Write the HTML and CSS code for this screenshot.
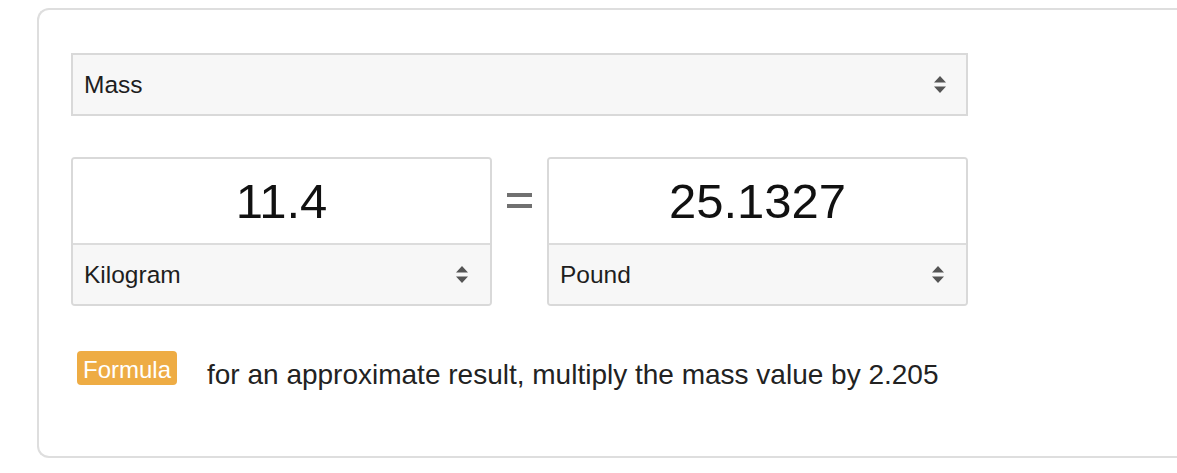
FILE: index.html
```html
<!DOCTYPE html>
<html>
<head>
<meta charset="utf-8">
<link rel="stylesheet" href="styles.css">
</head>
<body>
<div class="card">
  <div class="select select-type">
    <span>Mass</span>
    <svg class="arrows" width="12" height="17" viewBox="0 0 12 17"><path d="M6 0 L12 6.5 L0 6.5 Z M0 10.5 L12 10.5 L6 17 Z" fill="#555"/></svg>
  </div>
  <div class="converter">
    <div class="unit-box">
      <div class="value">11.4</div>
      <div class="select unit-select">
        <span>Kilogram</span>
        <svg class="arrows" width="12" height="17" viewBox="0 0 12 17"><path d="M6 0 L12 6.5 L0 6.5 Z M0 10.5 L12 10.5 L6 17 Z" fill="#555"/></svg>
      </div>
    </div>
    <div class="equals"><span class="bar"></span><span class="bar"></span></div>
    <div class="unit-box">
      <div class="value">25.1327</div>
      <div class="select unit-select">
        <span>Pound</span>
        <svg class="arrows" width="12" height="17" viewBox="0 0 12 17"><path d="M6 0 L12 6.5 L0 6.5 Z M0 10.5 L12 10.5 L6 17 Z" fill="#555"/></svg>
      </div>
    </div>
  </div>
  <div class="formula">
    <span class="badge">Formula</span>
    <span class="formula-text">for an approximate result, multiply the mass value by 2.205</span>
  </div>
</div>
</body>
</html>
```

FILE: styles.css
```css
html, body {
  margin: 0;
  padding: 0;
  background: #fff;
  overflow: hidden;
}
body {
  font-family: "Liberation Sans", Arial, sans-serif;
  color: #222;
  padding: 8px 0 0 37px;
}
.card {
  border: 2px solid #dedede;
  border-right: none;
  border-radius: 12px 0 0 12px;
  padding: 43px 0 65px 32px;
}
.select {
  display: flex;
  align-items: center;
  justify-content: space-between;
  background: #f7f7f7;
  font-size: 24.5px;
  color: #1e1e1e;
  box-sizing: border-box;
  padding: 0 20px 0 11px;
}
.select-type {
  width: 897px;
  height: 63px;
  border: 2px solid #d9d9d9;
}
.arrows {
  display: block;
}
.converter {
  display: grid;
  grid-template-columns: 421px 55px 421px;
  margin-top: 41px;
}
.unit-box {
  border: 2px solid #d9d9d9;
  border-radius: 4px;
  height: 149px;
  box-sizing: border-box;
  display: flex;
  flex-direction: column;
  overflow: hidden;
}
.value {
  height: 84px;
  display: flex;
  align-items: center;
  justify-content: center;
  font-size: 49px;
  color: #111;
  border-bottom: 2px solid #dcdcdc;
  background: #fff;
}
.unit-select {
  flex: 1;
  padding-right: 22px;
}
.equals {
  display: flex;
  flex-direction: column;
  align-items: center;
  padding-top: 36px;
  gap: 7px;
}
.bar {
  display: block;
  width: 25px;
  height: 4px;
  background: #707070;
}
.formula {
  display: flex;
  align-items: flex-start;
  margin-top: 45px;
  padding-left: 6px;
}
.badge {
  background: #eeac44;
  color: #fff;
  font-size: 24px;
  border-radius: 4px;
  height: 34px;
  width: 100px;
  display: flex;
  align-items: center;
  justify-content: center;
  box-sizing: border-box;
  padding-top: 4px;
}
.formula-text {
  margin-left: 30px;
  margin-top: 8px;
  font-size: 28px;
  line-height: 32px;
  color: #222;
}
```
